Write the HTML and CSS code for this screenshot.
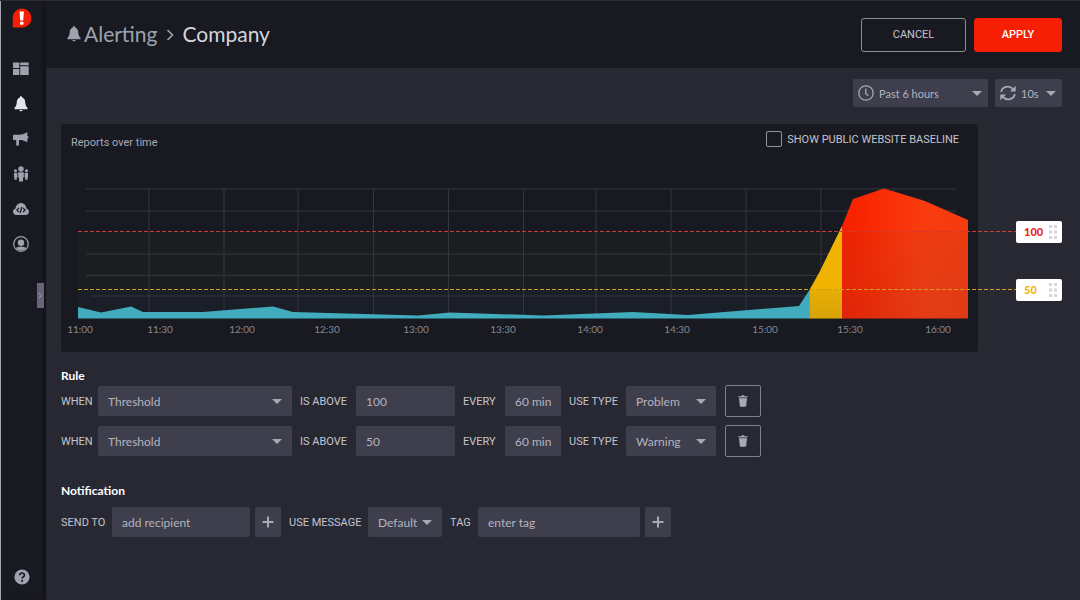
FILE: index.html
```html
<!DOCTYPE html>
<html lang="en">
<head>
<meta charset="utf-8">
<title>Alerting - Company</title>
<link rel="stylesheet" href="styles.css">
</head>
<body>
<div class="app">
  <nav class="sidebar" aria-label="Main">
    <a class="logo" href="#" aria-label="Home">
      <svg width="20" height="20" viewBox="0 0 20 20"><path d="M10 .5a9.500 9.500 0 1 1 0 19H.7V10A9.400 9.400 0 0 1 10 .5z" fill="#f61e03"/><path d="M7.600 3.500h4.300l-.7 9H8.200z" fill="#fff"/><rect x="8" y="13.700" width="3.500" height="3" rx=".7" fill="#fff"/></svg>
    </a>
    <a class="nav-item" href="#" aria-label="Dashboard">
      <svg width="16" height="16" viewBox="0 0 16 16" fill="currentColor"><rect x="0" y="1.500" width="6.300" height="5.500" rx=".5"/><rect x="0" y="8" width="6.300" height="6" rx=".5"/><rect x="7.200" y="1.500" width="8.500" height="2.700" rx=".5"/><rect x="7.200" y="5.300" width="8.500" height="8.700" rx=".5"/></svg>
    </a>
    <a class="nav-item active" href="#" aria-label="Alerting">
      <svg width="16" height="16" viewBox="0 0 16 16" fill="currentColor"><path d="M8 .3c.8 0 1.200.5 1.200 1.200 2 .7 2.900 2.300 3 4.500.1 2.700.8 4.300 2.300 5.800v1.400h-13v-1.400C3 10.300 3.700 8.700 3.800 6c.1-2.200 1-3.800 3-4.500C6.800.8 7.200.3 8 .3zM6.300 14h3.400c-.3.900-.9 1.300-1.700 1.300s-1.400-.4-1.700-1.300z"/></svg>
    </a>
    <a class="nav-item" href="#" aria-label="Announcements">
      <svg width="16" height="16" viewBox="0 0 16 16" fill="currentColor"><path d="M14.300 1v3.800c1.600.2 1.600 2.900 0 3.100V11.500C11.500 9.600 9.300 9 6 9v5.600H3.200V9H.8C.3 9 0 8.700 0 8.200V4.500c0-.5.3-.8.800-.8H6c3.300 0 5.500-.8 8.300-2.700z"/></svg>
    </a>
    <a class="nav-item" href="#" aria-label="Teams">
      <svg width="16" height="16" viewBox="0 0 16 16" fill="currentColor"><circle cx="8" cy="3" r="2.700"/><circle cx="2.500" cy="4.800" r="1.600"/><circle cx="13.500" cy="4.800" r="1.600"/><path d="M5.200 6.300h5.600v5.200H10v4H6v-4h-.8zM1 7h3.400v4.500h-.6v2.300H1.400v-2.300H1zM11.600 7H15v4.500h-.4v2.300h-2.400v-2.300h-.6z"/></svg>
    </a>
    <a class="nav-item" href="#" aria-label="API">
      <svg width="16" height="16" viewBox="0 0 16 16"><path d="M3.400 14C1.300 14 0 12.500 0 10.600c0-1.700 1-2.700 2.500-3.200C3 4.300 5.200 2 8 2s5 2.300 5.500 5.400c1.500.5 2.500 1.500 2.500 3.200 0 1.900-1.300 3.400-3.400 3.400z" fill="currentColor"/><path d="M6 6.800L3.900 9 6 11.200M10 6.800L12.100 9 10 11.200M8.900 6L7.100 12" fill="none" stroke="#191922" stroke-width="1.200"/></svg>
    </a>
    <a class="nav-item" href="#" aria-label="Account">
      <svg width="16" height="16" viewBox="0 0 16 16"><circle cx="8" cy="8" r="7.300" fill="none" stroke="currentColor" stroke-width="1.200"/><circle cx="8" cy="6.700" r="3.200" fill="currentColor"/><path d="M2.700 12c2.300-1.700 8.300-1.700 10.600 0-1.300 1.700-3 2.400-5.300 2.400S4 13.700 2.700 12z" fill="currentColor"/></svg>
    </a>
    <button class="expander" aria-label="Expand menu"><svg width="5" height="7" viewBox="0 0 5 7"><path d="M1 1l2.500 2.500L1 6" fill="none" stroke="#a5a5b3"/></svg></button>
    <a class="nav-help" href="#" aria-label="Help">
      <svg width="16" height="16" viewBox="0 0 16 16"><circle cx="8" cy="8" r="7.600" fill="currentColor"/><path d="M5.700 6.200c.1-3 4.800-2.800 4.700 0 0 1.600-2.300 1.500-2.300 3.300" fill="none" stroke="#191922" stroke-width="1.700"/><circle cx="8.100" cy="11.800" r="1.100" fill="#191922"/></svg>
    </a>
  </nav>

  <div class="page">
    <header class="topbar">
      <h1 class="crumbs">
        <svg width="14" height="16" viewBox="1 0 14 16" fill="#9fa3ae"><path d="M8 .3c.8 0 1.200.5 1.200 1.200 2 .7 2.900 2.300 3 4.500.1 2.700.8 4.300 2.300 5.800v1.400h-13v-1.400C3 10.300 3.700 8.700 3.800 6c.1-2.200 1-3.800 3-4.500C6.800.8 7.200.3 8 .3zM6.300 14h3.400c-.3.900-.9 1.300-1.700 1.300s-1.400-.4-1.700-1.300z"/></svg>
        <a class="crumb-parent" href="#">Alerting</a>
        <svg class="crumb-sep" width="8" height="12" viewBox="0 0 8 12"><path d="M1.500 1l5 5-5 5" fill="none" stroke="#9fa3ae" stroke-width="1.600"/></svg>
        <span>Company</span>
      </h1>
      <div class="actions">
        <button class="btn btn-outline">CANCEL</button>
        <button class="btn btn-primary">APPLY</button>
      </div>
    </header>

    <main class="content">
      <div class="toolbar">
        <div class="select tool range">
          <svg class="tool-icon" width="16" height="16" viewBox="0 0 16 16" fill="none" stroke="currentColor"><circle cx="8" cy="8" r="7.200" stroke-width="1.300"/><path d="M7.800 3.500V8.500l2.500 2.200" stroke-width="1.300"/></svg>
          <select aria-label="Time range"><option>Past 6 hours</option></select>
        </div>
        <div class="select tool refresh">
          <svg class="tool-icon" width="16" height="16" viewBox="0 0 16 16"><path d="M1.200 6.800C2 1.500 9.500-.3 13.300 4.300M14.800 9.200C14 14.500 6.500 16.300 2.700 11.700" fill="none" stroke="currentColor" stroke-width="1.900"/><path d="M15.700.8v5.800H9.900zM.3 15.200V9.400h5.800z" fill="currentColor"/></svg>
          <select aria-label="Refresh interval"><option>10s</option></select>
        </div>
      </div>

      <section class="chart-card">
        <div class="chart-head">
          <h2>Reports over time</h2>
          <label class="check"><input type="checkbox">SHOW PUBLIC WEBSITE BASELINE</label>
        </div>
        <div class="plot">
          <svg class="plot-svg" viewBox="-1 0 917 188" role="img" aria-label="Reports over time, 11:00 to 16:00">
            <defs>
              <linearGradient id="problem" x1="0" x2="1" y1="0" y2="0"><stop offset="0" stop-color="#f62000"/><stop offset="0.250" stop-color="#fa2a02"/><stop offset="0.650" stop-color="#f93c0f"/><stop offset="1" stop-color="#f53a0e"/></linearGradient>
              <linearGradient id="shade" x1="0" x2="0" y1="0" y2="1"><stop offset="0" stop-color="#504040" stop-opacity="0.060"/><stop offset="1" stop-color="#504040" stop-opacity="0.140"/></linearGradient>
              <pattern id="dash-problem" width="6" height="1" x="16" y="67" patternUnits="userSpaceOnUse"><rect width="4" height="1" fill="#cf3a36"/></pattern>
              <pattern id="dash-warning" width="6" height="1" x="16" y="125" patternUnits="userSpaceOnUse"><rect width="4" height="1" fill="#cfa01c"/></pattern>
            </defs>
            <rect x="16" y="68" width="890" height="58" fill="#1b1d20"/>
            <rect x="16" y="126" width="890" height="28" fill="#1a1e26"/>
            <path class="grid" d="M24 25H894M24 47H894M24 90H894M24 111.500H894M30 132H894M87 25V154M162 25V154M236 25V154M311.500 25V154M386.500 25V154M461.500 25V154M534 25V154M609 25V154M684 25V154M759 25V154M832 25V154"/>
            <path d="M16 143L39 148.500 69 142.500 81 148H141L211 142.500 231 148 356 151.500 388 148.500 481 151.500 571 148 626 151 737 142 748 125V154.500H16z" fill="#40acbd"/>
            <path d="M748 125L758 107 778 66 780 62V154.500H748z" fill="#f0b400"/>
            <path d="M780 62L791 35 822 24.500 863 37 906 56V154.500H780z" fill="url(#problem)"/>
            <rect x="748" y="126" width="32" height="28" fill="url(#shade)"/>
            <rect x="780" y="68" width="126" height="86" fill="url(#shade)"/>
            <rect x="16" y="67" width="938" height="1" fill="url(#dash-problem)"/>
            <rect x="16" y="125" width="938" height="1" fill="url(#dash-warning)"/>
            <g class="ticks">
              <text x="18" y="169">11:00</text><text x="98" y="169">11:30</text><text x="180" y="169">12:00</text><text x="265" y="169">12:30</text><text x="354" y="169">13:00</text><text x="441" y="169">13:30</text><text x="528" y="169">14:00</text><text x="615" y="169">14:30</text><text x="703" y="169">15:00</text><text x="788" y="169">15:30</text><text x="876" y="169">16:00</text>
            </g>
          </svg>
          <button class="handle handle-problem" aria-label="Problem threshold 100">100<svg width="8" height="14" viewBox="0 0 8 14" fill="#d5d5da"><path d="M0 0h3v3H0zM5 0h3v3H5zM0 5.500h3v3H0zM5 5.500h3v3H5zM0 11h3v3H0zM5 11h3v3H5z"/></svg></button>
          <button class="handle handle-warning" aria-label="Warning threshold 50">50<svg width="8" height="14" viewBox="0 0 8 14" fill="#d5d5da"><path d="M0 0h3v3H0zM5 0h3v3H5zM0 5.500h3v3H0zM5 5.500h3v3H5zM0 11h3v3H0zM5 11h3v3H5z"/></svg></button>
        </div>
      </section>

      <section class="rules">
        <h2>Rule</h2>
        <div class="rule-row">
          <label for="when1">WHEN</label>
          <div class="select"><select id="when1"><option>Threshold</option></select></div>
          <label for="above1">IS ABOVE</label>
          <input id="above1" type="text" value="100">
          <label for="every1">EVERY</label>
          <input id="every1" type="text" value="60 min">
          <label for="type1">USE TYPE</label>
          <div class="select"><select id="type1"><option>Problem</option></select></div>
          <button class="trash" aria-label="Delete rule"><svg width="10" height="12" viewBox="0 0 10 12" fill="currentColor"><path d="M.5 1.200h3l.5-.9h2l.5.9h3v1.300h-9zM1 3.200h8l-.8 7.500c-.1.700-.5 1-1.200 1H3c-.7 0-1.100-.3-1.200-1z"/></svg></button>
        </div>
        <div class="rule-row">
          <label for="when2">WHEN</label>
          <div class="select"><select id="when2"><option>Threshold</option></select></div>
          <label for="above2">IS ABOVE</label>
          <input id="above2" type="text" value="50">
          <label for="every2">EVERY</label>
          <input id="every2" type="text" value="60 min">
          <label for="type2">USE TYPE</label>
          <div class="select"><select id="type2"><option>Warning</option></select></div>
          <button class="trash" aria-label="Delete rule"><svg width="10" height="12" viewBox="0 0 10 12" fill="currentColor"><path d="M.5 1.200h3l.5-.9h2l.5.9h3v1.300h-9zM1 3.200h8l-.8 7.500c-.1.700-.5 1-1.200 1H3c-.7 0-1.100-.3-1.200-1z"/></svg></button>
        </div>
      </section>

      <section class="notify">
        <h2>Notification</h2>
        <div class="notify-row">
          <label for="sendto">SEND TO</label>
          <input id="sendto" type="text" placeholder="add recipient">
          <button class="plus" aria-label="Add recipient"><svg width="12" height="12" viewBox="0 0 12 12"><path d="M6 .5v11M.5 6h11" stroke="currentColor" stroke-width="2"/></svg></button>
          <label for="message">USE MESSAGE</label>
          <div class="select tight"><select id="message"><option>Default</option></select></div>
          <label for="tag">TAG</label>
          <input id="tag" type="text" placeholder="enter tag">
          <button class="plus" aria-label="Add tag"><svg width="12" height="12" viewBox="0 0 12 12"><path d="M6 .5v11M.5 6h11" stroke="currentColor" stroke-width="2"/></svg></button>
        </div>
      </section>
    </main>
  </div>
</div>
</body>
</html>
```
FILE: styles.css
```css
* { box-sizing: border-box; }

body {
  margin: 0;
  background: #282833;
  color: #c4c5ce;
  font-family: Lato, "Open Sans", sans-serif;
  font-size: 12px;
}

button, input, select {
  font: inherit;
  color: inherit;
  margin: 0;
}

button { cursor: pointer; }
svg { display: block; flex: none; }
a { color: inherit; text-decoration: none; }

.app {
  display: flex;
  min-height: 100vh;
  border-top: 1px solid #2b2c37;
}

/* Sidebar */
.sidebar {
  display: flex;
  flex-direction: column;
  align-items: center;
  flex: none;
  width: 46px;
  padding: 7px 4px 15px 0;
  border-left: 1px solid #a5a6ad;
  background: #191922;
  box-shadow: inset -3px 0 2px #14141b;
  color: #9fa3ae;
}

.logo { margin-bottom: 33px; }
.nav-item { margin: 0 2px 19px 0; }
.nav-item.active { color: #e4e5ea; }

.expander {
  display: grid;
  place-items: center;
  align-self: flex-end;
  width: 7px;
  height: 25px;
  margin: 12px -2px 0 0;
  padding: 0;
  border: 0;
  background: #67647a;
}

.nav-help { margin-top: auto; }

/* Header */
.page {
  flex: 1;
  min-width: 0;
}

.topbar {
  display: flex;
  align-items: center;
  justify-content: space-between;
  height: 67px;
  padding: 0 18px 0 21px;
  background: #191922;
}

.crumbs {
  display: flex;
  align-items: center;
  margin: 0;
  padding-bottom: 2px;
  color: #d4d6df;
  font-size: 21px;
  font-weight: 400;
  line-height: 28px;
}

.crumb-parent {
  margin-left: 3px;
  color: #9fa3ae;
}

.crumb-sep { margin: 2px 8px 0 9px; }

.actions {
  display: flex;
  gap: 8px;
}

.btn {
  height: 34px;
  border: 1px solid #8b8c97;
  border-radius: 3px;
  font-family: Roboto, sans-serif;
  font-size: 11px;
}

.btn-outline {
  width: 105px;
  background: transparent;
}

.btn-primary {
  width: 88px;
  border-color: #f61e03;
  background: #f61e03;
  color: #fff;
  font-weight: 500;
}

/* Fields */
input[type="text"], select {
  width: 100%;
  height: 30px;
  padding: 0 0 0 10px;
  border: 0;
  border-radius: 2px;
  background: #3f3e4c;
  color: #b2b4be;
}

input::placeholder {
  color: #b2b4be;
  opacity: 1;
}

.select {
  position: relative;
  color: #a6aab5;
}

.select::after {
  content: "";
  position: absolute;
  top: 50%;
  right: 10px;
  margin-top: -2px;
  border: 5px solid transparent;
  border-top-color: #a6aab5;
  border-bottom: 0;
  pointer-events: none;
}

select { appearance: none; }

/* Toolbar */
.content { padding: 11px 18px 16px 15px; }

.toolbar {
  display: flex;
  justify-content: flex-end;
  gap: 7px;
  margin-bottom: 17px;
  font-size: 11px;
}

.tool select {
  height: 28px;
  padding: 0 0 0 26px;
}

.tool::after { right: 6px; }
.range { width: 135px; }
.refresh { width: 67px; }

.tool-icon {
  position: absolute;
  top: 6px;
  left: 5px;
  pointer-events: none;
}

/* Chart */
.chart-card {
  margin-right: 84px;
  border-radius: 3px;
  background: #191921;
}

.chart-head {
  display: flex;
  align-items: flex-start;
  justify-content: space-between;
  height: 40px;
  padding: 7px 19px 0 10px;
}

.chart-head h2 {
  margin: 0;
  color: #a6a8b2;
  font-family: Roboto, sans-serif;
  font-size: 11px;
  font-weight: 400;
  line-height: 24px;
}

.check {
  display: flex;
  align-items: center;
  gap: 5px;
  font-family: Roboto, sans-serif;
  font-size: 11px;
}

.check input {
  appearance: none;
  width: 16px;
  height: 16px;
  margin: 0;
  border: 1px solid #9495a0;
  border-radius: 2px;
}

.plot { position: relative; }

.plot-svg {
  width: 100%;
  height: auto;
  overflow: visible;
}

.grid {
  fill: none;
  stroke: #34363f;
}

.ticks {
  fill: #858791;
  font-size: 10px;
  text-anchor: middle;
}

.handle {
  position: absolute;
  left: calc(100% + 38px);
  display: flex;
  align-items: center;
  justify-content: space-between;
  width: 46px;
  height: 22px;
  margin-top: -11px;
  padding: 0 5px 0 8px;
  border: 0;
  border-radius: 2px;
  background: #fff;
  font-size: 11px;
  font-weight: 900;
}

.handle-problem { top: 36%; color: #e62a1c; }
.handle-warning { top: 67%; color: #f2b613; }

/* Forms */
.rules h2, .notify h2 {
  margin: 0;
  color: #fff;
  font-size: 12px;
  font-weight: 700;
  line-height: 16px;
}

.rules { padding-top: 16px; }
.notify { padding-top: 18px; }

.rule-row, .notify-row {
  display: grid;
  align-items: center;
}

.rule-row {
  grid-template-columns: 37px 194px 64px 99px 50px 56px 65px 90px 45px;
  height: 32px;
  margin-bottom: 8px;
}

.rule-row:first-of-type { margin-top: 1px; }

.notify-row {
  grid-template-columns: 51px 138px 31px 87px 74px 36px 162px 31px;
  margin-top: 8px;
}

.rule-row label, .notify-row label {
  padding-left: 8px;
  font-family: Roboto, sans-serif;
  font-size: 11px;
  white-space: nowrap;
}

.rule-row label:first-child, .notify-row label:first-child { padding-left: 0; }

.trash, .plus {
  display: grid;
  place-items: center;
  justify-self: end;
  padding: 0;
  border-radius: 2px;
  color: #a6aab5;
}

.trash {
  width: 36px;
  height: 32px;
  border: 1px solid #80818d;
  background: transparent;
}

.plus {
  width: 26px;
  height: 30px;
  border: 0;
  background: #3f3e4c;
}
```
